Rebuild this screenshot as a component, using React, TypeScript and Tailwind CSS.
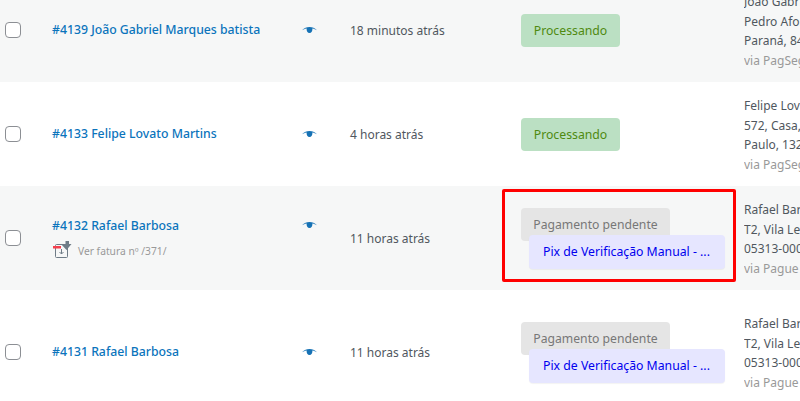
const font = { fontFamily: '"Noto Sans", sans-serif' };

function Eye() {
  return (
    <svg width="15" height="8" viewBox="0 0 15 8" className="block">
      <path d="M0 4.2C2.5 1.8 4.5 1 7.5 1s5 .8 7.5 3.2C12.8 2.9 11 2.4 10.4 2.4 10.6 5 9.4 7 7.5 7S4.4 5 4.6 2.4C4 2.4 2.2 2.9 0 4.2z" fill="#1672b5" />
    </svg>
  );
}

function InvoiceIcon() {
  return (
    <svg width="19" height="18" viewBox="0 0 19 18" className="block">
      <rect x="2.5" y="3.5" width="12" height="13" rx="1" fill="none" stroke="#6f7c87" strokeWidth="1" />
      <path d="M8.5 8v5M6.5 11l2 2 2-2" fill="none" stroke="#6f7c87" strokeWidth="1" />
      <path d="M8 3h4.5V0h3.5v3h2.5l-5 6z" fill="#6f7c87" />
      <rect x="0" y="5" width="8" height="2.5" fill="#f5404e" />
    </svg>
  );
}

function Checkbox() {
  return <span className="block w-4 h-4 rounded-[4px] border border-[#8c8f94] bg-white" />;
}

function Processing() {
  return (
    <span className="flex items-center justify-center w-[99px] h-[33px] pt-[2px] rounded-[4px] bg-[#bbe0c3] text-[#4f8a10] text-[12.25px]">
      Processando
    </span>
  );
}

function Pending() {
  return (
    <div className="flex flex-col items-start w-[204px] mt-px">
      <span className="flex items-center justify-center w-[149px] h-[33px] pt-px rounded-[4px] bg-[#e5e5e5] text-[#777777] text-[12.2px]">
        Pagamento pendente
      </span>
      <span className="flex items-center justify-center w-[196px] h-[34px] -mt-[6px] ml-2 pr-px rounded-[4px] bg-[#e6e6ff] text-[#0000ee] text-[12.25px] shadow-[0_1px_1px_rgba(0,0,0,0.05)]">
        Pix de Verificação Manual - ...
      </span>
    </div>
  );
}

type Order = {
  title: string;
  date: string;
  address: string[];
  via: string;
  pending?: boolean;
  invoice?: boolean;
  striped?: boolean;
  height: string;
  highlight?: boolean;
};

const orders: Order[] = [
  {
    title: '#4139 João Gabriel Marques batista',
    date: '18 minutos atrás',
    address: ['João Gabriel', 'Pedro Afonso', 'Paraná, 84'],
    via: 'via PagSeguro',
    striped: true,
    height: 'h-[104px]',
  },
  {
    title: '#4133 Felipe Lovato Martins',
    date: '4 horas atrás',
    address: ['Felipe Lovato', '572, Casa,', 'Paulo, 132'],
    via: 'via PagSeguro',
    height: 'h-[104px]',
  },
  {
    title: '#4132 Rafael Barbosa',
    date: '11 horas atrás',
    address: ['Rafael Barbosa', 'T2, Vila Leopoldina', '05313-000'],
    via: 'via Pague',
    pending: true,
    invoice: true,
    striped: true,
    height: 'h-[104px]',
    highlight: true,
  },
  {
    title: '#4131 Rafael Barbosa',
    date: '11 horas atrás',
    address: ['Rafael Barbosa', 'T2, Vila Leopoldina', '05313-000'],
    via: 'via Pague',
    pending: true,
    height: 'h-[124px]',
  },
];

function Row({ order }: { order: Order }) {
  return (
    <div
      className={`relative grid grid-cols-[52px_250px_48px_171px_223px_56px] items-center ${order.height} ${
        order.striped ? 'bg-[#f6f7f7]' : 'bg-white'
      }`}
    >
      <div className="pl-[5px]">
        <Checkbox />
      </div>
      <div className="flex flex-col">
        <span className="text-[12.25px] font-medium text-[#0b74bc] whitespace-nowrap">{order.title}</span>
        {order.invoice && (
          <div className="flex items-center gap-[6px] mt-[6px] ml-px text-[10.25px] text-[#999999]">
            <InvoiceIcon />
            <span className="pt-[3px]">Ver fatura nº /371/</span>
          </div>
        )}
      </div>
      <div className={order.invoice ? 'mb-[26px]' : ''}>
        <Eye />
      </div>
      <div className="pt-px text-[12px] text-[#50575e] whitespace-nowrap">{order.date}</div>
      <div>{order.pending ? <Pending /> : <Processing />}</div>
      <div className="overflow-hidden whitespace-nowrap pt-[2px] text-[12px] leading-[19.5px] text-[#50575e]">
        {order.address.map((line) => (
          <div key={line}>{line}</div>
        ))}
        <div className="text-[#999999]">{order.via}</div>
      </div>
      {order.highlight && (
        <div className="absolute left-[502px] top-[3px] w-[234px] h-[93px] border-[3px] border-[#ff0000] rounded-[2px]" />
      )}
    </div>
  );
}

export default function App() {
  return (
    <div className="w-[800px] h-[401px] overflow-hidden bg-white" style={font}>
      <div className="-mt-[22px]">
        {orders.map((order) => (
          <Row key={order.title} order={order} />
        ))}
      </div>
    </div>
  );
}
